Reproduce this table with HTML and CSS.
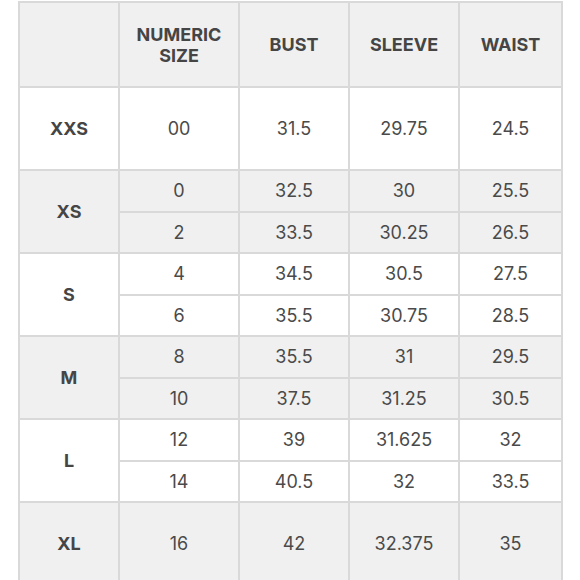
FILE: index.html
```html
<!DOCTYPE html>
<html>
<head>
<meta charset="utf-8">
<link rel="stylesheet" href="styles.css">
</head>
<body>
<table class="chart">
  <colgroup>
    <col class="c1"><col class="c2"><col class="c3"><col class="c4"><col class="c5">
  </colgroup>
  <thead>
    <tr class="head">
      <th></th><th>NUMERIC<br>SIZE</th><th>BUST</th><th>SLEEVE</th><th>WAIST</th>
    </tr>
  </thead>
  <tbody>
    <tr class="single white"><th>XXS</th><td>00</td><td>31.5</td><td>29.75</td><td>24.5</td></tr>
    <tr class="sub gray"><th rowspan="2">XS</th><td>0</td><td>32.5</td><td>30</td><td>25.5</td></tr>
    <tr class="sub gray"><td>2</td><td>33.5</td><td>30.25</td><td>26.5</td></tr>
    <tr class="sub white"><th rowspan="2">S</th><td>4</td><td>34.5</td><td>30.5</td><td>27.5</td></tr>
    <tr class="sub white"><td>6</td><td>35.5</td><td>30.75</td><td>28.5</td></tr>
    <tr class="sub gray"><th rowspan="2">M</th><td>8</td><td>35.5</td><td>31</td><td>29.5</td></tr>
    <tr class="sub gray"><td>10</td><td>37.5</td><td>31.25</td><td>30.5</td></tr>
    <tr class="sub white"><th rowspan="2">L</th><td>12</td><td>39</td><td>31.625</td><td>32</td></tr>
    <tr class="sub white"><td>14</td><td>40.5</td><td>32</td><td>33.5</td></tr>
    <tr class="single gray"><th>XL</th><td>16</td><td>42</td><td>32.375</td><td>35</td></tr>
  </tbody>
</table>
</body>
</html>
```
FILE: styles.css
```css
html, body {
  margin: 0;
  padding: 0;
  background: #ffffff;
}
body {
  padding: 1px 0 0 18px;
  font-family: Inter, "Noto Sans", sans-serif;
  color: #4a4a4a;
}
.chart {
  border-collapse: collapse;
  table-layout: fixed;
  width: 543px;
}
.c1 { width: 100px; }
.c2 { width: 120px; }
.c3 { width: 110px; }
.c4 { width: 110px; }
.c5 { width: 103px; }
.chart th, .chart td {
  border: 2px solid #d9d9d9;
  text-align: center;
  vertical-align: middle;
  padding: 0;
  font-size: 18px;
}
.chart th {
  font-weight: 700;
  color: #454545;
}
.chart td {
  font-weight: 400;
}
.head th {
  background: #f0f0f0;
  line-height: 21px;
}
.head { height: 85px; }
.single { height: 83px; }
.sub { height: 41.5px; }
.gray th, .gray td { background: #f0f0f0; }
.white th, .white td { background: #ffffff; }
```
